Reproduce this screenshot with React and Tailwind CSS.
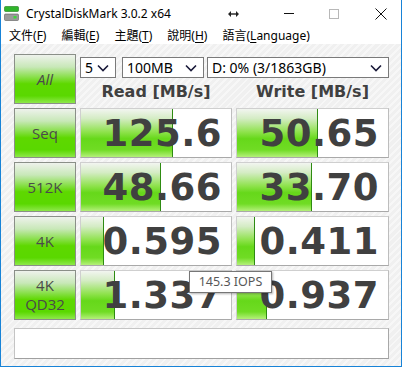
import React from "react";

const Chevron = () => (
  <svg width="12" height="8" viewBox="0 0 12 8" className="shrink-0">
    <path d="M1 1.5 L6 6.5 L11 1.5" fill="none" stroke="#1a1a3a" strokeWidth="1.6" />
  </svg>
);

const Select = ({ w, label }) => (
  <div
    className={`${w} h-[21px] bg-white border border-[#7a7a7a] flex items-center justify-between pl-[4px] pr-[6px] text-[14px] text-black leading-none`}
    style={{ fontFamily: '"Noto Sans", sans-serif' }}
  >
    <span>{label}</span>
    <Chevron />
  </div>
);

const GreenButton = ({ children, italic }) => (
  <div className="w-[62px] h-[50px] shrink-0 border border-[#8a8f88] bg-[linear-gradient(to_bottom,#eef2ec_0%,#c8e8b8_25%,#8ce050_45%,#5ed800_60%,#5ad800_85%,#8ee84a_100%)] flex flex-col items-center justify-center text-[#4a4a4a] leading-[19px]">
    <div
      className={`text-[15px] ${italic ? "italic" : ""} flex flex-col items-center`}
      style={{ fontFamily: '"Open Sans", sans-serif' }}
    >
      {children}
    </div>
  </div>
);

const Cell = ({ value, bar, w }) => (
  <div className={`${w} h-[50px] shrink-0 relative bg-white border border-[#cfcfcf] border-b-[#a9a9a9] border-r-[#bdbdbd] overflow-hidden`}>
    <div
      className="absolute left-0 top-0 bottom-0 border-r border-[#2e8b12] bg-[linear-gradient(to_bottom,#f2f5f0_0%,#d4ecc4_20%,#8ee24c_48%,#66d81a_62%,#70dc24_85%,#b4f07a_100%)]"
      style={{ width: bar }}
    />
    <div
      className="relative h-full flex items-center justify-end pr-[9px] text-[37px] font-bold text-[#404040] leading-none tracking-[0.5px]"
      style={{ fontFamily: '"DejaVu Sans", sans-serif' }}
    >
      {value}
    </div>
  </div>
);

const Row = ({ label, italic, read, readBar, write, writeBar }) => (
  <div className="flex gap-[4px]">
    <GreenButton italic={italic}>{label}</GreenButton>
    <Cell value={read} bar={readBar} w="w-[152px]" />
    <Cell value={write} bar={writeBar} w="w-[153px]" />
  </div>
);

const MenuItem = ({ text, letter, rest }) => (
  <span className="whitespace-nowrap">
    {text}(<span className="underline underline-offset-2">{letter}</span>{rest})
  </span>
);

export default function App() {
  return (
    <div
      className="w-[402px] h-[367px] relative flex flex-col bg-white border-x border-b border-[#1883d7] overflow-hidden"
      style={{ fontFamily: '"Noto Sans", "Noto Sans CJK TC", sans-serif' }}
    >
      {/* Title bar */}
      <div className="h-[27px] shrink-0 flex items-center bg-white text-black">
        <svg width="15" height="15" viewBox="0 0 15 15" className="ml-[3px] mr-[7px]">
          <rect x="0.5" y="0.5" width="14" height="5" rx="1" fill="#2fb52a" stroke="#1e7a1a" strokeWidth="0.6" />
          <rect x="0.5" y="8" width="14" height="6.5" rx="1" fill="#9a9a9a" stroke="#5c5c5c" strokeWidth="0.6" />
          <rect x="9.5" y="10" width="3" height="2.5" fill="#3ed83a" />
        </svg>
        <span className="w-[142px] text-[12px] whitespace-nowrap">CrystalDiskMark 3.0.2 x64</span>
        <svg width="11" height="8" viewBox="0 0 11 8" className="ml-[60px]">
          <path d="M0 4 L3 1 L3 7 Z M11 4 L8 1 L8 7 Z" fill="#222" />
          <rect x="2" y="3.3" width="7" height="1.4" fill="#222" />
        </svg>
        <div className="ml-[45px] w-[10px] h-[1px] bg-[#111]" />
        <div className="ml-[35px] w-[10px] h-[10px] border border-[#b8b8b8]" />
        <svg width="12" height="12" viewBox="0 0 12 12" className="ml-[36px]">
          <path d="M0.5 0.5 L11.5 11.5 M11.5 0.5 L0.5 11.5" stroke="#111" strokeWidth="1" />
        </svg>
      </div>
      {/* Menu bar */}
      <div className="h-[17px] shrink-0 flex items-center gap-[15px] pl-[8px] text-[12px] text-black leading-none">
        <MenuItem text="文件" letter="F" />
        <MenuItem text="編輯" letter="E" />
        <MenuItem text="主題" letter="T" />
        <MenuItem text="說明" letter="H" />
        <MenuItem text="語言" letter="L" rest="anguage" />
      </div>
      {/* Content */}
      <div className="flex-1 bg-[#f1f1f1] bg-[repeating-linear-gradient(135deg,#f0f0f0_0px,#f0f0f0_3px,#f7f7f7_3px,#f7f7f7_5px)] pl-[13px] pt-[10px] flex flex-col gap-[4px]">
        <div className="flex gap-[4px]">
          <GreenButton italic>All</GreenButton>
          <div className="flex flex-col">
            <div className="flex items-center mt-[3px]">
              <Select w="w-[36px]" label="5" />
              <div className="w-[6px]" />
              <Select w="w-[82px]" label="100MB" />
              <div className="w-[3px]" />
              <Select w="w-[182px]" label="D: 0% (3/1863GB)" />
            </div>
            <div
              className="flex mt-[3px] text-[16px] font-bold text-[#404040] leading-[22px]"
              style={{ fontFamily: '"DejaVu Sans", sans-serif' }}
            >
              <div className="w-[152px] text-center">Read [MB/s]</div>
              <div className="w-[4px]" />
              <div className="w-[153px] text-center">Write [MB/s]</div>
            </div>
          </div>
        </div>
        <Row label="Seq" read="125.6" readBar={92} write="50.65" writeBar={81} />
        <Row label="512K" read="48.66" readBar={80} write="33.70" writeBar={75} />
        <Row label="4K" read="0.595" readBar={23} write="0.411" writeBar={18} />
        <Row
          label={
            <>
              <span>4K</span>
              <span>QD32</span>
            </>
          }
          read="1.337"
          readBar={34}
          write="0.937"
          writeBar={30}
        />
        <div className="mt-[4px] w-[375px] h-[31px] bg-white border border-[#c4c4c4] border-b-[#a0a0a0] border-r-[#a8a8a8]" />
      </div>
      {/* Tooltip */}
      <div
        className="absolute left-[188px] top-[271px] w-[83px] h-[22px] bg-white border border-[#767676] shadow-[1px_1px_2px_rgba(0,0,0,0.3)] flex items-center justify-center text-[12.5px] text-[#575757]"
        style={{ fontFamily: '"Noto Sans", sans-serif' }}
      >
        145.3 IOPS
      </div>
    </div>
  );
}
